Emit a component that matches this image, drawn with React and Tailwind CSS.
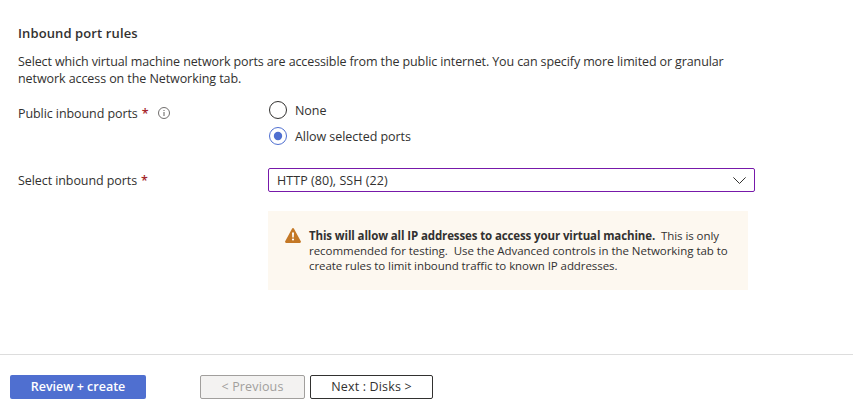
import React from "react";

function Required() {
  return <span className="ml-1 w-[6px] font-semibold tracking-normal text-[#a4262c]">*</span>;
}

function InfoIcon() {
  return (
    <svg className="ml-[10px] h-3 w-3 shrink-0" viewBox="0 0 12 12" fill="none" stroke="#605e5c">
      <circle cx="6" cy="6" r="5.5" strokeWidth="0.9" />
      <path d="M6 5v4M6 3v1" strokeWidth="1" />
    </svg>
  );
}

function WarningIcon() {
  return (
    <svg className="mt-[17px] ml-[17px] h-[15px] w-4 shrink-0" viewBox="0 0 16 15">
      <path d="M7 .7a1.15 1.15 0 0 1 2 0l6.8 12.5a1.15 1.15 0 0 1-1 1.7H1.2a1.15 1.15 0 0 1-1-1.7Z" fill="#c47826" />
      <path d="M7 4.5h2l-.3 5H7.3Z" fill="#fff" />
      <circle cx="8" cy="11.5" r="1.1" fill="#fff" />
    </svg>
  );
}

function Radio({ label, checked }) {
  return (
    <div className="flex h-[26px] items-center">
      <svg className="h-[18px] w-[18px] shrink-0" viewBox="0 0 18 18" fill="none">
        <circle cx="9" cy="9" r="8.5" stroke={checked ? "#4f6fd0" : "#323130"} />
        {checked && <circle cx="9" cy="9" r="4.2" fill="#4f6fd0" />}
      </svg>
      <span className="ml-2 whitespace-nowrap tracking-[-0.05px]">{label}</span>
    </div>
  );
}

export default function App() {
  return (
    <main className="flex h-[419px] w-[853px] flex-col overflow-hidden bg-white font-['Open_Sans','Noto_Sans',sans-serif] text-[12.5px] leading-[17px] text-[#323130]">
      <section className="h-[354px] pt-[25px] pl-[18px]">
        <h2 className="text-[13px] font-semibold tracking-[0.11px] whitespace-nowrap">Inbound port rules</h2>
        <p className="mt-[11px] whitespace-nowrap">
          <span className="block w-fit tracking-[-0.112px]">Select which virtual machine network ports are accessible from the public internet. You can specify more limited or granular</span>
          <span className="block w-fit tracking-[-0.08px]">network access on the Networking tab.</span>
        </p>
        <div className="mt-[10px] flex h-[52px]">
          <div className="flex h-[32px] w-[251px] items-center whitespace-nowrap">
            <span className="tracking-[-0.08px]">Public inbound ports</span><Required /><InfoIcon />
          </div>
          <div>
            <Radio label="None" />
            <Radio label="Allow selected ports" checked />
          </div>
        </div>
        <div className="mt-[19px] flex h-6 items-center">
          <div className="flex w-[250px] items-center whitespace-nowrap">
            <span className="tracking-[-0.08px]">Select inbound ports</span><Required />
          </div>
          <div className="flex h-6 w-[487px] items-center justify-between rounded-[2px] border border-[#7719aa] pr-2 pl-2">
            <span className="tracking-[0.05px]">HTTP (80), SSH (22)</span>
            <svg className="h-[7px] w-[13px]" viewBox="0 0 13 7" fill="none" stroke="#323130">
              <path d="m.4.4 6.1 6.1L12.6.4" />
            </svg>
          </div>
        </div>
        <div className="mt-[19px] ml-[250px] flex h-[79px] w-[480px] bg-[#fdf8f0]">
          <WarningIcon />
          <p className="mt-[17px] ml-2 text-[11.5px] leading-[15px] whitespace-nowrap">
            <span className="block tracking-[-0.06px]"><b className="font-bold tracking-[-0.12px]">This will allow all IP addresses to access your virtual machine.</b>&nbsp; This is only</span>
            <span className="block tracking-[-0.04px]">recommended for testing.&nbsp; Use the Advanced controls in the Networking tab to</span>
            <span className="block tracking-[-0.07px]">create rules to limit inbound traffic to known IP addresses.</span>
          </p>
        </div>
      </section>
      <footer className="flex h-[65px] border-t border-[#dddddd] pt-[20px] pl-[10px] leading-[22px]">
        <button className="h-6 w-[136px] rounded-[2px] bg-[#4f6fd0] font-semibold text-white">Review + create</button>
        <button className="ml-[54px] h-6 w-[105px] rounded-[2px] border border-[#a19f9d] bg-[#f3f2f1] tracking-[0.15px] text-[#a19f9d]">&lt; Previous</button>
        <button className="ml-[5px] h-6 w-[123px] rounded-[2px] border border-[#323130] bg-white tracking-[0.15px]">Next : Disks &gt;</button>
      </footer>
    </main>
  );
}
